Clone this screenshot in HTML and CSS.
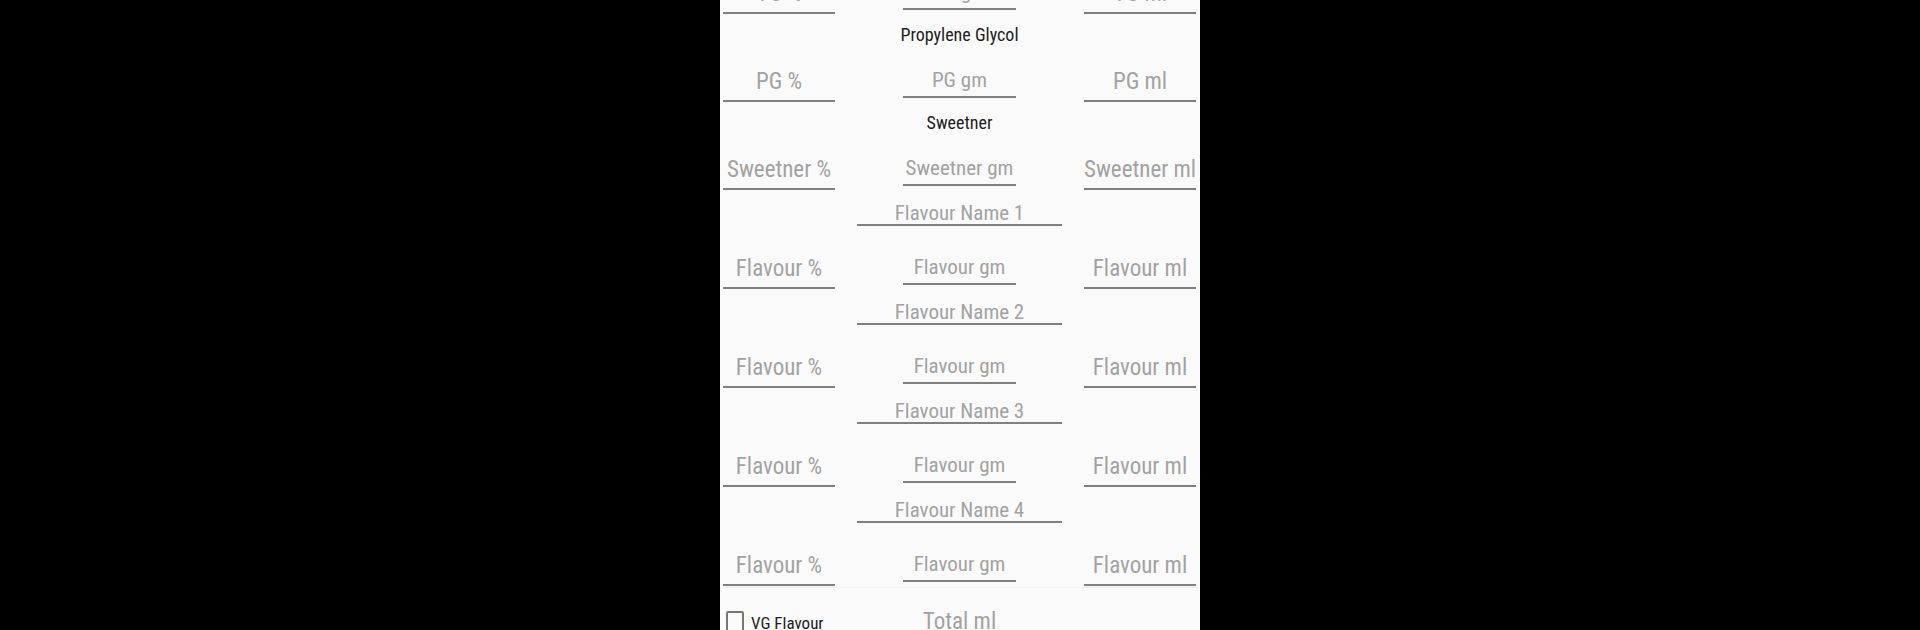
FILE: index.html
```html
<!DOCTYPE html>
<html lang="en">
<head>
<meta charset="utf-8">
<title>Flavour calculator</title>
<link rel="stylesheet" href="styles.css">
</head>
<body>
<main class="panel">
  <form class="scroll">
    <section class="group">
      <h2 class="title">Vegetable Glycerin</h2>
      <div class="row">
        <input class="field" placeholder="VG %" aria-label="VG %">
        <input class="field field-mid" placeholder="VG gm" aria-label="VG gm">
        <input class="field" placeholder="VG ml" aria-label="VG ml">
      </div>
    </section>
    <section class="group">
      <h2 class="title">Propylene Glycol</h2>
      <div class="row">
        <input class="field" placeholder="PG %" aria-label="PG %">
        <input class="field field-mid" placeholder="PG gm" aria-label="PG gm">
        <input class="field" placeholder="PG ml" aria-label="PG ml">
      </div>
    </section>
    <section class="group">
      <h2 class="title">Sweetner</h2>
      <div class="row">
        <input class="field" placeholder="Sweetner %" aria-label="Sweetner %">
        <input class="field field-mid" placeholder="Sweetner gm" aria-label="Sweetner gm">
        <input class="field" placeholder="Sweetner ml" aria-label="Sweetner ml">
      </div>
    </section>
    <section class="group flavour">
      <input class="field name" placeholder="Flavour Name 1" aria-label="Flavour Name 1">
      <div class="row">
        <input class="field" placeholder="Flavour %" aria-label="Flavour 1 %">
        <input class="field field-mid" placeholder="Flavour gm" aria-label="Flavour 1 gm">
        <input class="field" placeholder="Flavour ml" aria-label="Flavour 1 ml">
      </div>
    </section>
    <section class="group flavour">
      <input class="field name" placeholder="Flavour Name 2" aria-label="Flavour Name 2">
      <div class="row">
        <input class="field" placeholder="Flavour %" aria-label="Flavour 2 %">
        <input class="field field-mid" placeholder="Flavour gm" aria-label="Flavour 2 gm">
        <input class="field" placeholder="Flavour ml" aria-label="Flavour 2 ml">
      </div>
    </section>
    <section class="group flavour">
      <input class="field name" placeholder="Flavour Name 3" aria-label="Flavour Name 3">
      <div class="row">
        <input class="field" placeholder="Flavour %" aria-label="Flavour 3 %">
        <input class="field field-mid" placeholder="Flavour gm" aria-label="Flavour 3 gm">
        <input class="field" placeholder="Flavour ml" aria-label="Flavour 3 ml">
      </div>
    </section>
    <section class="group flavour">
      <input class="field name" placeholder="Flavour Name 4" aria-label="Flavour Name 4">
      <div class="row">
        <input class="field" placeholder="Flavour %" aria-label="Flavour 4 %">
        <input class="field field-mid" placeholder="Flavour gm" aria-label="Flavour 4 gm">
        <input class="field" placeholder="Flavour ml" aria-label="Flavour 4 ml">
      </div>
    </section>
    <footer class="row footer">
      <label class="check"><input class="box" type="checkbox">VG Flavour</label>
      <input class="field field-mid total" placeholder="Total ml" aria-label="Total ml">
    </footer>
  </form>
</main>
</body>
</html>
```
FILE: styles.css
```css
* {
  box-sizing: border-box;
}

body {
  margin: 0;
  background: #000;
  color: #1c1c1c;
  font-family: "Roboto Condensed", Roboto, sans-serif;
}

.panel {
  width: 25%;
  height: 100vh;
  margin: 0 auto;
  overflow: hidden;
  background: #fafafa;
}

/* The form is shown part-way down its scroll range. */
.scroll {
  margin-top: -74px;
}

.group {
  display: flex;
  flex-direction: column;
  align-items: center;
  padding: 8px 4px 0 3px;
}

.title {
  margin: 0 0 13px;
  font-size: 18px;
  font-weight: 400;
  line-height: 26px;
}

.row {
  display: grid;
  grid-template-columns: 112fr 249fr 112fr;
  align-items: start;
  width: 100%;
}

.field {
  width: 100%;
  height: 41px;
  margin: 0;
  padding: 2px 0 0;
  border: 0;
  border-bottom: 2px solid #808080;
  border-radius: 0;
  outline: 0;
  background: transparent;
  color: #1c1c1c;
  font-family: inherit;
  font-size: 23px;
  text-align: center;
}

.field::placeholder {
  color: #a2a2a2;
  opacity: 1;
}

.field-mid {
  justify-self: center;
  width: 45%;
  height: 37px;
  font-size: 21px;
}

.flavour {
  padding-top: 10px;
}

.name {
  width: 205px;
  height: 26px;
  margin-bottom: 22px;
  font-size: 21px;
}

.footer {
  margin-top: 1px;
  padding: 12px 4px 0 3px;
  border-top: 1px solid #f0f0f0;
}

.check {
  display: flex;
  align-items: center;
  gap: 7px;
  padding: 9px 0 0 3px;
  font-size: 17px;
  line-height: 28px;
  white-space: nowrap;
}

.box {
  flex: none;
  appearance: none;
  width: 18px;
  height: 24px;
  margin: 0;
  border: 2px solid #777;
  border-radius: 2px;
}

.total {
  height: 42px;
  font-size: 23px;
}
```
